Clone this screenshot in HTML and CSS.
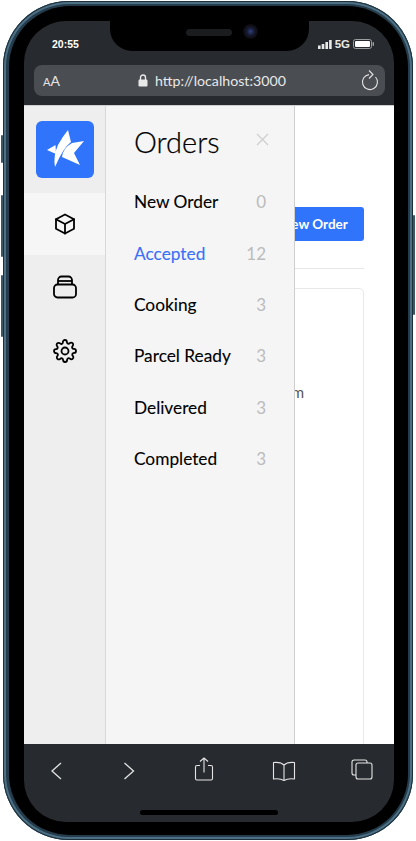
FILE: index.html
```html
<!DOCTYPE html>
<html lang="en">
<head>
  <meta charset="UTF-8" />
  <meta name="viewport" content="width=device-width, initial-scale=1.0">
  <title>Orders</title>
  <link rel="stylesheet" href="styles.css">
</head>
<body>
  <div class="device">
    <span class="side-btn side-mute"></span>
    <span class="side-btn side-up"></span>
    <span class="side-btn side-down"></span>
    <span class="side-btn side-power"></span>

    <div class="bezel">
      <div class="screen">
        <!-- notch with speaker and camera -->
        <div class="notch">
          <span class="speaker"></span>
          <span class="camera"></span>
        </div>

        <header class="browser-top">
          <div class="status-bar">
            <span class="clock">20:55</span>
            <div class="status-icons">
              <svg class="signal" width="14" height="9" viewBox="0 0 14 9"><rect x="0" y="5.500" width="2.600" height="3.500"/><rect x="3.700" y="4" width="2.600" height="5"/><rect x="7.400" y="2" width="2.600" height="7"/><rect x="11.100" y="0" width="2.600" height="9"/></svg>
              <span class="network">5G</span>
              <svg width="21" height="10" viewBox="0 0 21 10"><rect x="0.500" y="0.500" width="18" height="9" rx="2" fill="none" stroke="#9a9c9e"/><rect x="2" y="2" width="15" height="6" rx="1" fill="#fff"/><rect x="19.500" y="3" width="1.500" height="4" rx="0.700" fill="#9a9c9e"/></svg>
            </div>
          </div>
          <div class="url-bar">
            <span class="text-size"><small>A</small>A</span>
            <div class="url">
              <svg width="10" height="13" viewBox="0 0 10 13"><path d="M2.500 6V3.500a2.500 2.500 0 0 1 5 0V6" fill="none" stroke="#e8e8e8" stroke-width="1.400"/><rect x="0.500" y="5.500" width="9" height="7" rx="1.200" fill="#e8e8e8"/></svg>
              <span>http://localhost:3000</span>
            </div>
            <svg class="reload" width="18" height="22" viewBox="0 0 18 22" fill="none" stroke="#e4e4e4" stroke-width="1.100"><path d="M14.500 8A7.500 7.500 0 1 1 8 5.600"/><path d="M8 1.500 12 5.500 8 9.500"/></svg>
          </div>
        </header>

        <div class="viewport">
          <!-- page under the drawer -->
          <main class="page">
            <div class="page-head">
              <button class="btn-new" type="button">New Order</button>
            </div>
            <div class="card">
              <p class="card-line">Item</p>
            </div>
          </main>

          <aside class="rail">
            <div class="logo">
              <svg width="58" height="57" viewBox="0 0 58 57" fill="#fff">
                <path d="M11 29 19.500 24 20 33Z"/>
                <path d="M32 9 35 21Q27 27 19 46 17 35 22 24 27 15 32 9Z"/>
                <path d="M48 20 38 32 44 44 26 36Q27 27 36 22Z"/>
              </svg>
            </div>
            <nav class="rail-nav">
              <a class="rail-item active" href="#">
                <svg width="24" height="24" viewBox="0 0 24 24" fill="none" stroke="#000" stroke-width="1.800" stroke-linejoin="round" stroke-linecap="round"><path d="M12 2.500 21 7.200v9.600l-9 4.700-9-4.700V7.200z"/><path d="M3 7.200l9 4.800 9-4.800M12 12v9.500"/></svg>
              </a>
              <a class="rail-item" href="#">
                <svg width="26" height="26" viewBox="0 0 26 26" fill="none" stroke="#000" stroke-width="1.800" stroke-linejoin="round"><rect x="2" y="10.500" width="22" height="13" rx="3.500"/><path d="M6 10.500V6a3.500 3.500 0 0 1 3.500-3.500h7A3.500 3.500 0 0 1 20 6v4.500"/><path d="M6 7h14"/></svg>
              </a>
              <a class="rail-item" href="#">
                <svg width="24" height="24" viewBox="0 0 24 24" fill="none" stroke="#000" stroke-width="1.800" stroke-linejoin="round"><circle cx="12" cy="12" r="3.500"/><path d="M19.400 15a1.650 1.650 0 0 0 .33 1.820l.06.06a2 2 0 1 1-2.830 2.830l-.06-.06a1.650 1.650 0 0 0-2.800 1.170V21a2 2 0 0 1-4 0v-.09a1.650 1.650 0 0 0-2.800-1.170l-.06.06a2 2 0 1 1-2.830-2.830l.06-.06a1.650 1.650 0 0 0-1.170-2.800H3a2 2 0 0 1 0-4h.09a1.650 1.650 0 0 0 1.170-2.800l-.06-.06a2 2 0 1 1 2.830-2.830l.06.06a1.650 1.650 0 0 0 2.800-1.170V3a2 2 0 0 1 4 0v.09a1.650 1.650 0 0 0 2.800 1.170l.06-.06a2 2 0 1 1 2.830 2.830l-.06.06a1.650 1.650 0 0 0 1.170 2.800H21a2 2 0 0 1 0 4h-.09a1.650 1.650 0 0 0-1.510 1z"/></svg>
              </a>
            </nav>
          </aside>

          <aside class="drawer">
            <div class="drawer-head">
              <h2>Orders</h2>
              <svg class="close" width="13" height="13" viewBox="0 0 13 13" stroke="#cfcfcf" stroke-width="1.300"><path d="M1 1l11 11M12 1 1 12"/></svg>
            </div>
            <ul class="status-list">
              <li><span>New Order</span><span class="count">0</span></li>
              <li class="current"><span>Accepted</span><span class="count">12</span></li>
              <li><span>Cooking</span><span class="count">3</span></li>
              <li><span>Parcel Ready</span><span class="count">3</span></li>
              <li><span>Delivered</span><span class="count">3</span></li>
              <li><span>Completed</span><span class="count">3</span></li>
            </ul>
          </aside>
        </div>

        <footer class="browser-bottom">
          <div class="toolbar">
            <svg width="14" height="20" viewBox="0 0 14 20" fill="none" stroke="#e4e4e4" stroke-width="1.300"><path d="M12 2 3 10l9 8"/></svg>
            <svg width="15" height="20" viewBox="0 0 15 20" fill="none" stroke="#e4e4e4" stroke-width="1.300"><path d="M3.500 2l9 8-9 8"/></svg>
            <svg class="tool-share" width="20" height="24" viewBox="0 0 20 24" fill="none" stroke="#e4e4e4" stroke-width="1.100"><path d="M6 8.500H3a1.500 1.500 0 0 0-1.500 1.500v11.500A1.500 1.500 0 0 0 3 23h14a1.500 1.500 0 0 0 1.500-1.500V10A1.500 1.500 0 0 0 17 8.500h-3"/><path d="M10 15.500V1M6 4.500 10 1l4 3.500"/></svg>
            <svg width="24" height="20" viewBox="0 0 24 20" fill="none" stroke="#e4e4e4" stroke-width="1.100" stroke-linejoin="round"><path d="M12 4C10 2 6 1 1.500 1.500V18c4-.6 8 0 10.500 1.500C14.500 18 18.500 17.400 22.500 18V1.500C18 1 14 2 12 4zM12 4v15.500"/></svg>
            <svg class="tool-tabs" width="22" height="21" viewBox="0 0 22 21" fill="none" stroke="#e4e4e4" stroke-width="1.100"><rect x="5" y="4" width="16" height="16" rx="2"/><path d="M5 16H3a2 2 0 0 1-2-2V3a2 2 0 0 1 2-2h11a2 2 0 0 1 2 2v1"/></svg>
          </div>
          <span class="home-bar"></span>
        </footer>
      </div>
    </div>
  </div>
</body>
</html>
```

FILE: styles.css
```css
* {
  box-sizing: border-box;
}
html, body {
  margin: 0;
  height: 100%;
  background: #fff;
}
body {
  font-family: "Lato", "Noto Sans", sans-serif;
  color: #000;
  overflow: hidden;
}

/* phone frame */
.device {
  position: relative;
  width: 410px;
  height: 839px;
  margin: 1px 0 0 3px;
  padding: 5px 5px 5px 6px;
  border-radius: 66px;
  background: #243c4b;
  box-shadow: inset 0 0 0 1px #1c2f3b, inset 0 0 0 3px #4d7085;
}
.bezel {
  height: 100%;
  padding: 15px 14px 13px 15px;
  border-radius: 61px;
  background: #000;
}
.screen {
  position: relative;
  display: flex;
  flex-direction: column;
  width: 370px;
  height: 801px;
  border-radius: 42px;
  overflow: hidden;
  background: #272b2f;
}
.side-btn {
  position: absolute;
  width: 2px;
  background: #3d5766;
  border-radius: 1px;
}
.side-mute {
  left: -2px;
  top: 134px;
  height: 28px;
}
.side-up {
  left: -2px;
  top: 194px;
  height: 62px;
}
.side-down {
  left: -2px;
  top: 274px;
  height: 62px;
}
.side-power {
  right: -2px;
  top: 214px;
  height: 100px;
}

/* notch */
.notch {
  position: absolute;
  top: 0;
  left: 86px;
  width: 199px;
  height: 30px;
  background: #000;
  border-radius: 0 0 22px 22px;
}
.speaker {
  position: absolute;
  left: 76px;
  top: 8px;
  width: 46px;
  height: 7px;
  border-radius: 4px;
  background: #1a1c1e;
}
.camera {
  position: absolute;
  left: 133px;
  top: 3px;
  width: 15px;
  height: 15px;
  border-radius: 50%;
  background: radial-gradient(circle, #2f3f80 0, #161a30 35%, #0a0a0c 70%);
}

/* browser chrome */
.browser-top {
  height: 85px;
  padding: 0 9px 0 10px;
  flex-shrink: 0;
  border-bottom: 1px solid #cfcfcf;
}
.status-bar {
  display: flex;
  justify-content: space-between;
  align-items: center;
  height: 44px;
  padding: 2px 1px 0 18px;
}
.clock {
  font-family: "Liberation Sans", sans-serif;
  font-size: 10.500px;
  font-weight: 700;
  color: #fff;
}
.status-icons {
  display: flex;
  align-items: center;
  gap: 3px;
  padding-right: 10px;
}
.signal {
  fill: #e8e8e8;
}
.network {
  font-family: "Liberation Sans", sans-serif;
  font-size: 11.500px;
  font-weight: 700;
  color: #e8e8e8;
}
.url-bar {
  position: relative;
  display: flex;
  align-items: center;
  justify-content: center;
  height: 31px;
  border-radius: 8px;
  background: #4a4d52;
}
.text-size {
  position: absolute;
  left: 9px;
  font-size: 14px;
  color: #e4e4e4;
}
.text-size small {
  font-size: 11px;
}
.url {
  display: flex;
  align-items: center;
  gap: 7px;
  margin-left: 5px;
  font-size: 14.200px;
  color: #e8e8e8;
}
.reload {
  position: absolute;
  right: 6px;
  top: 4px;
}

.viewport {
  position: relative;
  flex: 1;
  overflow: hidden;
  background: #fff;
}

/* page behind the drawer */
.page {
  height: 100%;
  padding: 101px 30px 0 40px;
}
.page-head {
  display: flex;
  justify-content: flex-end;
  padding-bottom: 27px;
  border-bottom: 1px solid #e6e6e6;
  margin-bottom: 19px;
}
.btn-new {
  height: 34px;
  width: 100px;
  padding: 0 14px 0 15px;
  border: 0;
  border-radius: 3px;
  background: #2f74fb;
  color: #fff;
  font-family: inherit;
  font-size: 13.500px;
  font-weight: 700;
  white-space: nowrap;
}
.card {
  height: 480px;
  padding-top: 94px;
  border: 1px solid #e8e8e8;
  border-radius: 5px;
}
.card-line {
  margin: 0;
  padding-right: 59px;
  font-size: 15px;
  text-align: right;
  color: #555;
}

/* icon rail and orders drawer */
.rail {
  position: absolute;
  left: 0;
  top: 0;
  bottom: 0;
  width: 82px;
  padding-top: 15px;
  background: #eee;
  border-right: 1px solid #d8d8d8;
}
.logo {
  display: flex;
  width: 58px;
  height: 57px;
  margin-left: 12px;
  border-radius: 6px;
  background: #2f74fb;
}
.rail-nav {
  margin-top: 15px;
}
.rail-item {
  display: flex;
  align-items: center;
  justify-content: center;
  height: 64px;
  padding-left: 1px;
}
.rail-item.active {
  height: 62px;
  background: #f6f6f6;
}
.drawer {
  position: absolute;
  left: 82px;
  top: 0;
  bottom: 0;
  width: 189px;
  padding: 0 28px 0 28px;
  background: #f5f5f5;
  border-right: 1px solid #cfcfcf;
}
.drawer-head {
  display: flex;
  justify-content: space-between;
  align-items: center;
  height: 70px;
}
.drawer-head h2 {
  margin: 0;
  font-size: 29px;
  font-weight: 300;
  -webkit-text-stroke: 0.25px currentColor;
}
.close {
  margin-right: -3px;
  margin-top: -4px;
}
.status-list {
  list-style: none;
  margin: 0;
  padding: 0;
}
.status-list li {
  display: flex;
  justify-content: space-between;
  align-items: center;
  height: 51.400px;
  font-size: 17.300px;
  -webkit-text-stroke: 0.1px currentColor;
}
.status-list .current {
  color: #3a6ff7;
}
.count {
  font-size: 17px;
  color: #bbb;
  -webkit-text-stroke: 0;
}

/* bottom toolbar */
.browser-bottom {
  position: relative;
  height: 78px;
  flex-shrink: 0;
}
.toolbar {
  display: flex;
  align-items: center;
  gap: 58px;
  height: 53px;
  padding-left: 24.500px;
}
.tool-share {
  margin-top: -4px;
}
.tool-tabs {
  margin: -3px 0 0 -3px;
}
.home-bar {
  position: absolute;
  left: 116px;
  bottom: 7px;
  width: 138px;
  height: 5px;
  border-radius: 3px;
  background: #000;
}
```
